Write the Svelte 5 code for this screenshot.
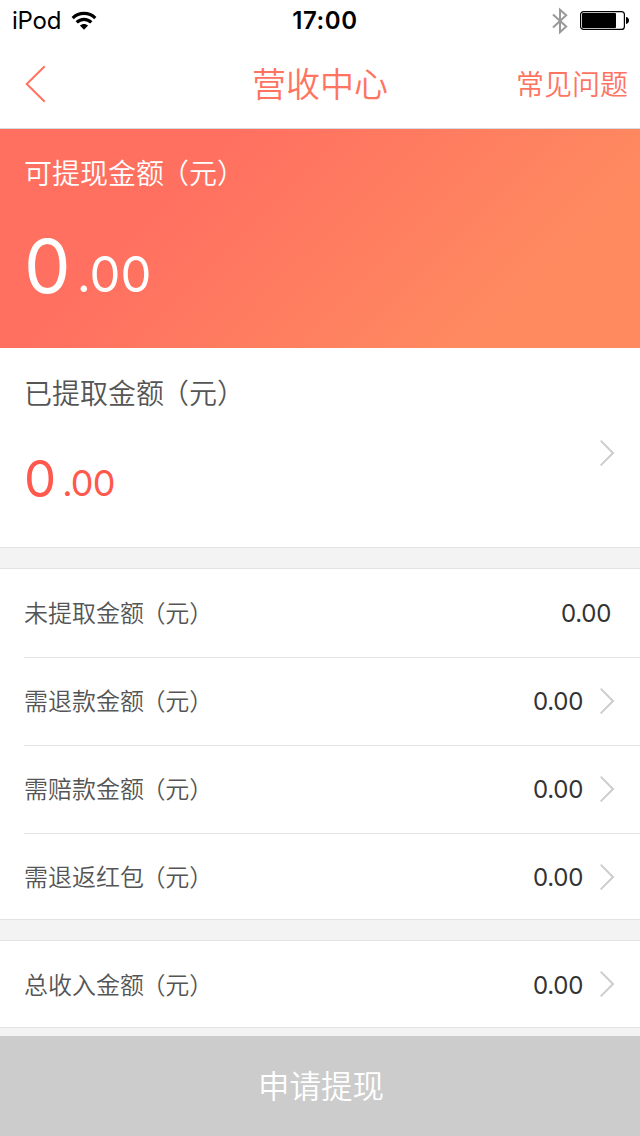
<script lang="ts">
  interface Row {
    label: string
    amount: string
    link: boolean
  }

  const details: Row[] = [
    { label: '未提取金额', amount: '0.00', link: false },
    { label: '需退款金额', amount: '0.00', link: true },
    { label: '需赔款金额', amount: '0.00', link: true },
    { label: '需退返红包', amount: '0.00', link: true },
  ]

  const totals: Row[] = [{ label: '总收入金额', amount: '0.00', link: true }]
</script>

{#snippet chevron()}
  <svg class="chevron" width="16" height="28" viewBox="0 0 16 28" aria-hidden="true">
    <path d="M.7 1.6L13 14L.7 26.4" fill="none" stroke="#ccc" stroke-width="2" />
  </svg>
{/snippet}

{#snippet unit()}
  <span class="unit">（元）</span>
{/snippet}

{#snippet row(item: Row)}
  <li class="row">
    <span class="label">{item.label}{@render unit()}</span>
    <span class="amount" class:plain={!item.link}>{item.amount}</span>
    {#if item.link}{@render chevron()}{/if}
  </li>
{/snippet}

<div class="page" lang="zh-CN">
  <div class="status">
    <div class="carrier">
      <span>iPod</span>
      <svg width="26" height="20" viewBox="0 0 26 20" aria-hidden="true">
        <g fill="none" stroke="#000" stroke-width="3.2">
          <path d="M1.7 7.1C8 .9 18 .9 24.3 7.1" />
          <path d="M5.7 11.4C9.9 7.3 16.1 7.3 20.3 11.4" />
        </g>
        <path d="M8.9 14.6C11.2 12.4 14.8 12.4 17.1 14.6L13 18.8Z" />
      </svg>
    </div>
    <span class="time">17:00</span>
    <div class="power">
      <svg width="18" height="28" viewBox="0 0 18 28" aria-hidden="true">
        <path
          d="M2 7.5L15.2 19.6L9 25.3V2.7L15.2 8.2L2 20.5"
          fill="none"
          stroke="#999"
          stroke-width="2"
        />
      </svg>
      <svg width="50" height="20" viewBox="0 0 50 20" aria-hidden="true">
        <rect x=".6" y=".6" width="43.8" height="17.8" rx="3" fill="none" stroke="#000" stroke-width="1.2" />
        <rect x="2" y="2" width="34" height="15" rx="1" />
        <path d="M46 6C50 6.3 50 12.7 46 13Z" />
      </svg>
    </div>
  </div>

  <header class="nav">
    <svg class="back" width="22" height="38" viewBox="0 0 22 38" aria-label="返回">
      <path d="M20.7 1.2L2.7 19L20.7 36.8" fill="none" stroke="#ff7361" stroke-width="2" />
    </svg>
    <h1>营收中心</h1>
    <span class="faq">常见问题</span>
  </header>

  <section class="hero">
    <div class="caption">可提现金额{@render unit()}</div>
    <div class="money"><span class="whole">0</span><span class="cents">.00</span></div>
  </section>

  <section class="withdrawn">
    <div>
      <div class="caption">已提取金额{@render unit()}</div>
      <div class="money"><span class="whole">0</span><span class="cents">.00</span></div>
    </div>
    {@render chevron()}
  </section>

  <ul class="group details">
    {#each details as item}
      {@render row(item)}
    {/each}
  </ul>

  <ul class="group totals">
    {#each totals as item}
      {@render row(item)}
    {/each}
  </ul>

  <button class="submit" disabled>申请提现</button>
</div>

<style>
  :global(body) {
    background: #f3f3f3;
  }

  .page {
    display: flex;
    flex-direction: column;
    width: 640px;
    height: 1136px;
    overflow: hidden;
    box-sizing: border-box;
    background: #f3f3f3;
    font-family: 'Noto Sans CJK SC', sans-serif;
    font-weight: 350;
    color: #555;
  }

  svg {
    display: block;
    flex: none;
  }

  .status {
    display: grid;
    grid-template-columns: 1fr auto 1fr;
    align-items: center;
    height: 40px;
    padding: 1px 10px 0 12px;
    box-sizing: border-box;
    background: #fff;
    color: #000;
    font-family: Inter, sans-serif;
    font-size: 24px;
    font-weight: 400;
  }

  .carrier {
    display: flex;
    align-items: center;
    gap: 10px;
    letter-spacing: -0.2px;
  }

  .time {
    margin-left: 8px;
    font-weight: 600;
    letter-spacing: 0.6px;
  }

  .power {
    display: flex;
    justify-content: flex-end;
    align-items: center;
    gap: 11px;
  }

  .nav {
    display: grid;
    grid-template-columns: 1fr auto 1fr;
    align-items: center;
    height: 88px;
    padding: 0 12px 0 24px;
    border-bottom: 1px solid #d8dbe2;
    background: #fff;
    color: #ff7361;
  }

  h1 {
    margin: -2px 0 0 -12px;
    font-size: 34px;
    line-height: 48px;
    font-weight: 350;
  }

  .faq {
    justify-self: end;
    margin-top: -2px;
    font-size: 28px;
    line-height: 40px;
  }

  .hero {
    height: 219px;
    padding: 23px 24px 0;
    box-sizing: border-box;
    background: linear-gradient(135deg, #ff7060 28%, #ff8a60 80%);
    color: #fff;
  }

  .caption {
    font-size: 28px;
    line-height: 40px;
  }

  /* pulls the full-width bracket towards the text before it */
  .unit {
    margin-left: -0.11em;
  }

  .money {
    display: flex;
    align-items: baseline;
    font-family: Inter, sans-serif;
    font-weight: 400;
  }

  .hero .money {
    margin-top: 29px;
    line-height: 90px;
  }

  .hero .whole {
    font-size: 74px;
  }

  .hero .cents {
    margin-left: 6px;
    font-size: 49px;
  }

  .cents {
    transform: translateY(-1px);
  }

  .withdrawn {
    display: flex;
    justify-content: space-between;
    height: 200px;
    padding: 24px 24px 0;
    box-sizing: border-box;
    border-bottom: 1px solid #e3e3e3;
    background: #fff;
  }

  .withdrawn .chevron {
    margin-top: 67px;
  }

  .withdrawn .money {
    margin-top: 37px;
    line-height: 60px;
    color: #ff584c;
  }

  .withdrawn .whole {
    font-size: 51px;
  }

  .withdrawn .cents {
    margin-left: 6px;
    font-size: 36px;
    letter-spacing: -0.8px;
  }

  .group {
    margin: 20px 0 0;
    padding: 0 0 0 24px;
    list-style: none;
    border-top: 1px solid #e3e3e3;
    border-bottom: 1px solid #e3e3e3;
    background: #fff;
  }

  .row {
    display: flex;
    align-items: center;
    height: 87px;
    padding-right: 24px;
    border-bottom: 1px solid #e3e3e3;
  }

  .details .row:first-child {
    height: 88px;
  }

  .details .row:last-child {
    height: 83px;
    padding-top: 2px;
    border-bottom: 0;
  }

  .totals .row {
    height: 86px;
    border-bottom: 0;
  }

  .label {
    flex: 1;
    margin-top: -3px;
    font-size: 24px;
    line-height: 34px;
  }

  .totals .label,
  .totals .amount {
    padding-top: 3px;
  }

  .amount {
    margin-right: 2px;
    color: #333;
    font-family: Inter, sans-serif;
    font-size: 24px;
    font-weight: 400;
    letter-spacing: -0.3px;
  }

  .amount.plain {
    margin-right: 5px;
  }

  .row .chevron {
    margin: -1px 0 0 15px;
  }

  .submit {
    margin-top: auto;
    height: 100px;
    padding: 0 0 4px 2px;
    border: 0;
    background: #ccc;
    color: #fff;
    font-family: inherit;
    font-size: 31.5px;
    font-weight: 350;
    line-height: 46px;
  }
</style>
